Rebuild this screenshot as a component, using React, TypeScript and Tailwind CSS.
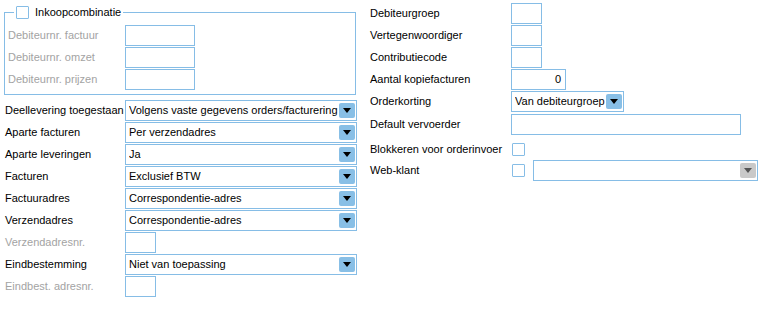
import React from "react"

const font = { fontFamily: '"Liberation Sans", Arial, sans-serif' }

function Arrow({ disabled }: { disabled?: boolean }) {
  return (
    <div className={`flex items-center justify-center w-[16px] h-[15px] rounded-[2px] ${disabled ? "bg-[#c9c9c9]" : "bg-[#88bfe6]"}`}>
      <svg width="8" height="5" viewBox="0 0 8 5">
        <path d="M0 0H8L4 5Z" fill={disabled ? "#555" : "#000"} />
      </svg>
    </div>
  )
}

function Select({ value, w, disabled }: { value: string; w: string; disabled?: boolean }) {
  return (
    <div className={`flex items-center justify-between h-[21px] border border-[#86bde6] bg-white pl-[3px] pr-[1px] ${w}`}>
      <span className="whitespace-nowrap overflow-hidden">{value}</span>
      <Arrow disabled={disabled} />
    </div>
  )
}

function Box({ w, value }: { w: string; value?: string }) {
  return (
    <div className={`h-[21px] border border-[#86bde6] bg-white flex items-center justify-end pr-[4px] ${w}`}>
      {value}
    </div>
  )
}

function Check() {
  return <div className="w-[13px] h-[13px] border border-[#86bde6] bg-white rounded-[1px]" />
}

function Row({ label, gray, lw = "w-[121px]", h = "h-[22px]", children }: { label: string; gray?: boolean; lw?: string; h?: string; children: React.ReactNode }) {
  return (
    <div className={`flex items-center ${h}`}>
      <div className={`shrink-0 whitespace-nowrap ${lw} ${gray ? "text-[#a3a3a3]" : "text-black"}`}>{label}</div>
      {children}
    </div>
  )
}

export default function App() {
  const rw = "w-[141px]"
  return (
    <div className="flex w-[763px] h-[314px] bg-white text-[11px] text-black" style={font}>
      <div className="flex flex-col w-[357px] pl-[4px] pt-[4px] shrink-0">
        <fieldset className="border border-[#86bde6] w-[352px] h-[91px] pl-[3px] pt-[4px]">
          <legend className="ml-[6px] px-[2px] flex items-center gap-[6px]">
            <Check />
            <span>Inkoopcombinatie</span>
          </legend>
          <Row label="Debiteurnr. factuur" gray lw="w-[117px]"><Box w="w-[70px]" /></Row>
          <Row label="Debiteurnr. omzet" gray lw="w-[117px]"><Box w="w-[70px]" /></Row>
          <Row label="Debiteurnr. prijzen" gray lw="w-[117px]"><Box w="w-[70px]" /></Row>
        </fieldset>
        <div className="flex flex-col pt-[4px] pl-[1px]">
          <Row label="Deellevering toegestaan" lw="w-[120px]"><Select value="Volgens vaste gegevens orders/facturering" w="w-[233px]" /></Row>
          <Row label="Aparte facturen" lw="w-[120px]"><Select value="Per verzendadres" w="w-[233px]" /></Row>
          <Row label="Aparte leveringen" lw="w-[120px]"><Select value="Ja" w="w-[233px]" /></Row>
          <Row label="Facturen" lw="w-[120px]"><Select value="Exclusief BTW" w="w-[233px]" /></Row>
          <Row label="Factuuradres" lw="w-[120px]"><Select value="Correspondentie-adres" w="w-[233px]" /></Row>
          <Row label="Verzendadres" lw="w-[120px]"><Select value="Correspondentie-adres" w="w-[233px]" /></Row>
          <Row label="Verzendadresnr." gray lw="w-[120px]"><Box w="w-[31px]" /></Row>
          <Row label="Eindbestemming" lw="w-[120px]"><Select value="Niet van toepassing" w="w-[233px]" /></Row>
          <Row label="Eindbest. adresnr." gray lw="w-[120px]"><Box w="w-[31px]" /></Row>
        </div>
      </div>
      <div className="flex flex-col pl-[13px] pt-[2px]">
        <Row label="Debiteurgroep" lw={rw}><Box w="w-[31px]" /></Row>
        <Row label="Vertegenwoordiger" lw={rw}><Box w="w-[31px]" /></Row>
        <Row label="Contributiecode" lw={rw}><Box w="w-[31px]" /></Row>
        <Row label="Aantal kopiefacturen" lw={rw}><Box w="w-[55px]" value="0" /></Row>
        <Row label="Orderkorting" lw={rw}><Select value="Van debiteurgroep" w="w-[113px]" /></Row>
        <div className="h-[1px]" />
        <Row label="Default vervoerder" lw={rw}><Box w="w-[230px]" /></Row>
        <div className="h-[4px]" />
        <Row label="Blokkeren voor orderinvoer" lw={rw} h="h-[20px]"><div className="pl-[1px]"><Check /></div></Row>
        <Row label="Web-klant" lw={rw}>
          <div className="pl-[1px] flex items-center gap-[8px]">
            <Check />
            <Select value="" w="w-[225px]" disabled />
          </div>
        </Row>
      </div>
    </div>
  )
}
